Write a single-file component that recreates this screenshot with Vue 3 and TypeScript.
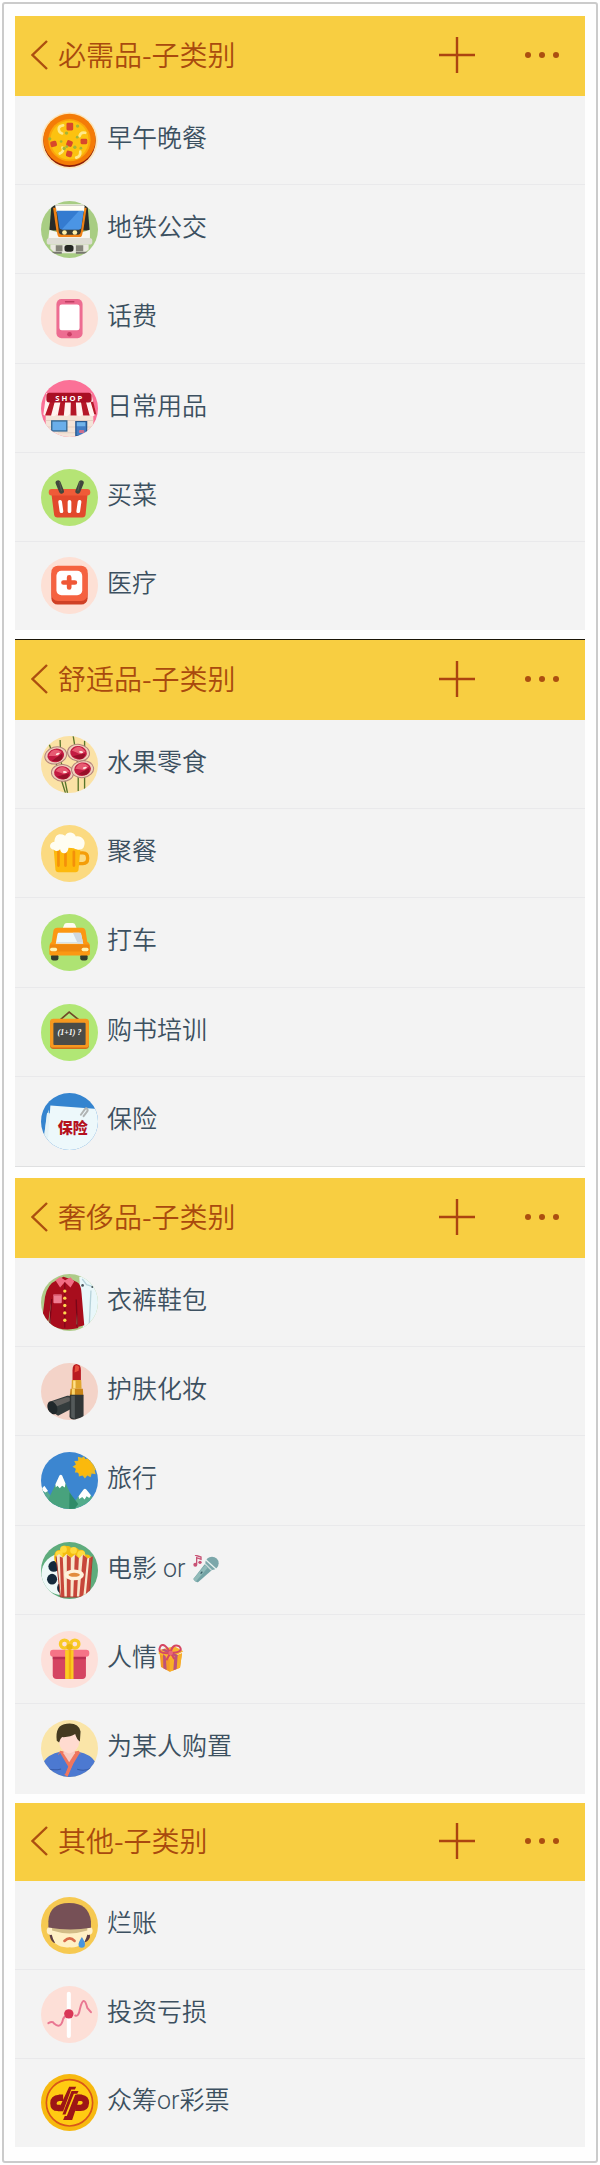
<script setup lang="ts">
interface Category {
  icon: string
  label: string
  emoji?: 'mic' | 'present'
}

interface Panel {
  title: string
  variant: string
  rows: Category[]
}

const panels: Panel[] = [
  {
    title: '必需品-子类别',
    variant: 'trimmed',
    rows: [
      { icon: 'pizza', label: '早午晚餐' },
      { icon: 'train', label: '地铁公交' },
      { icon: 'phone', label: '话费' },
      { icon: 'shop', label: '日常用品' },
      { icon: 'basket', label: '买菜' },
      { icon: 'medical', label: '医疗' },
    ],
  },
  {
    title: '舒适品-子类别',
    variant: 'ruled',
    rows: [
      { icon: 'fruit', label: '水果零食' },
      { icon: 'beer', label: '聚餐' },
      { icon: 'taxi', label: '打车' },
      { icon: 'board', label: '购书培训' },
      { icon: 'insurance', label: '保险' },
    ],
  },
  {
    title: '奢侈品-子类别',
    variant: 'plain',
    rows: [
      { icon: 'clothes', label: '衣裤鞋包' },
      { icon: 'lipstick', label: '护肤化妆' },
      { icon: 'travel', label: '旅行' },
      { icon: 'popcorn', label: '电影 or ', emoji: 'mic' },
      { icon: 'gift', label: '人情', emoji: 'present' },
      { icon: 'person', label: '为某人购置' },
    ],
  },
  {
    title: '其他-子类别',
    variant: 'trimmed compact',
    rows: [
      { icon: 'sad', label: '烂账' },
      { icon: 'chart', label: '投资亏损' },
      { icon: 'lottery', label: '众筹or彩票' },
    ],
  },
]
</script>

<template>
  <main class="sheet">
    <section v-for="panel in panels" :key="panel.title" class="panel" :class="panel.variant">
      <header class="bar">
        <button class="back" type="button" aria-label="返回">
          <svg width="17" height="30" viewBox="0 0 17 30"><path d="M16 1 1.500 15 16 29" fill="none" stroke="#ac4f10" stroke-width="2.400" /></svg>
        </button>
        <h2 class="title">{{ panel.title }}</h2>
        <button class="add" type="button" aria-label="添加">
          <svg width="36" height="36" viewBox="0 0 36 36"><path d="M18 0V36M0 18H36" fill="none" stroke="#ac4410" stroke-width="2.400" /></svg>
        </button>
        <button class="more" type="button" aria-label="更多">
          <svg width="36" height="8" viewBox="0 0 36 8" fill="#ac4f10"><circle cx="4" cy="4" r="3" /><circle cx="18" cy="4" r="3" /><circle cx="32" cy="4" r="3" /></svg>
        </button>
      </header>
      <ul class="list">
        <li v-for="row in panel.rows" :key="row.label" class="row">
          <svg class="icon" viewBox="0 0 170 170" aria-hidden="true">
            <g v-if="row.icon === 'pizza'">
              <circle cx="85" cy="85" r="84" fill="#fbe6bd" />
              <ellipse cx="85" cy="86" rx="78" ry="78" fill="#8f1f06" />
              <ellipse cx="85" cy="82" rx="78" ry="77" fill="#f47b07" />
              <ellipse cx="85" cy="84" rx="63" ry="63" fill="#fba60b" />
              <ellipse cx="85" cy="84" rx="57" ry="58" fill="#fcc210" />
              <g fill="#d8472b">
                <rect x="76" y="32" width="20" height="23" rx="4" />
                <rect x="28" y="87" width="19" height="17" rx="5" transform="rotate(-15 37 95)" />
                <rect x="76" y="85" width="18" height="18" rx="5" transform="rotate(20 85 94)" />
                <rect x="118" y="80" width="20" height="16" rx="4" />
                <rect x="75" y="116" width="18" height="18" rx="5" transform="rotate(15 84 125)" />
              </g>
              <g fill="none" stroke="#ffe98a" stroke-width="8" stroke-linecap="round">
                <path d="M66 40q-14 2-13 12t10 12M132 62q-14-3-17 10M64 106q6 12-8 18M117 118q2 14-12 18" />
              </g>
              <g fill="#a3b536">
                <circle cx="109" cy="42" r="5" /><circle cx="26" cy="80" r="5" /><circle cx="76" cy="63" r="5" />
                <circle cx="108" cy="75" r="4" /><circle cx="101" cy="105" r="5" /><circle cx="69" cy="109" r="5" />
                <circle cx="119" cy="108" r="4" /><circle cx="60" cy="88" r="4" /><circle cx="77" cy="103" r="4" />
              </g>
            </g>

            <g v-else-if="row.icon === 'train'">
              <rect width="170" height="170" fill="#a8cd83" />
              <path d="M31 12H139L145 88H25Z" fill="#292b28" />
              <path d="M42 10H130L119 110H53Z" fill="#f1f1e9" />
              <path d="M36 20 48 103q1 5 8 5H116q7 0 8-5L136 20" fill="#f08215" />
              <path d="M44 14H130L119 92q-1 8-8 9H63q-9-1-10-9Z" fill="#3a3b30" />
              <path d="M44 14H130L128 32H46Z" fill="#fffdf4" />
              <path d="M47 29H127L119 80q-1 5-6 5H61q-5 0-6-5Z" fill="#347bd0" />
              <path d="M113 30H127L120 79q-1 6-7 6H62Z" fill="#4b95e5" />
              <circle cx="70" cy="94" r="7" fill="#fff0a8" /><circle cx="101" cy="94" r="7" fill="#fff0a8" />
              <path d="M25 86 48 93q1 15 8 15H116q7 0 8-15l22-7V121H21Z" fill="#f6f6f0" />
              <rect x="17" y="110" width="136" height="20" rx="8" fill="#deddd4" />
              <path d="M28 130H142V145L128 156H42L28 142Z" fill="#e9e8df" />
              <rect x="44" y="132" width="20" height="18" fill="#858579" /><rect x="104" y="132" width="22" height="18" fill="#858579" />
              <rect x="70" y="131" width="27" height="20" rx="8" fill="#242621" />
              <path d="M28 151H62V157H28ZM104 151H144V157H104Z" fill="#77776e" />
            </g>

            <g v-else-if="row.icon === 'phone'">
              <rect width="170" height="170" fill="#fce0d8" />
              <rect x="46" y="27" width="78" height="117" rx="15" fill="#ed6c91" />
              <rect x="55" y="43" width="60" height="77" rx="7" fill="#fff" />
              <path d="M73 35H98" stroke="#be3f63" stroke-width="4" stroke-linecap="round" />
              <circle cx="85" cy="132" r="7" fill="#c83e65" />
            </g>

            <g v-else-if="row.icon === 'shop'">
              <rect width="170" height="170" fill="#fb7197" />
              <rect x="14" y="103" width="142" height="67" fill="#f4e4d8" />
              <path d="M14 121H156M14 140H156M50 157H130" stroke="#e4cfc2" stroke-width="3" />
              <path d="M16 39H150L163 103q-10 10-20 0q-9 10-19 0q-10 10-19 0q-10 10-20 0q-10 10-19 0q-10 10-19 0q-10 10-20 0q-10 10-20 0Z" fill="#fff3ef" />
              <path d="M27 65H41L30 106H12ZM58 65H72L68 106H50ZM89 65H104L106 106H88ZM119 65H134L145 106H126ZM148 65H156L165 103H159Z" fill="#b51727" />
              <rect x="16" y="38" width="135" height="29" rx="9" fill="#a90e23" />
              <text x="83" y="62" text-anchor="middle" class="sign">S H O P</text>
              <rect x="32" y="122" width="45" height="30" fill="#6aaeea" stroke="#356791" stroke-width="4" />
              <path d="M104 124H136V166H104Z" fill="#427dc4" stroke="#29598f" stroke-width="4" />
              <path d="M107 126H132V138H107Z" fill="#71b3e9" /><rect x="113" y="149" width="16" height="9" rx="3" fill="#cb708f" />
            </g>

            <g v-else-if="row.icon === 'basket'">
              <rect width="170" height="170" fill="#b5e475" />
              <path d="M31 73H139L133 136q-1 9-10 9H49q-9 0-10-9Z" fill="#e2492c" />
              <rect x="23" y="60" width="124" height="19" rx="9" fill="#ef5b38" />
              <path d="M51 41 61 66M120 41 110 66" stroke="#41473d" stroke-width="15" stroke-linecap="round" />
              <path d="M55 38 61 65M116 38 110 65" stroke="#66705b" stroke-width="2" />
              <path d="M57 98 61 126M85 98V126M115 98 111 126" stroke="#fff" stroke-width="11" stroke-linecap="round" />
            </g>

            <g v-else-if="row.icon === 'medical'">
              <rect width="170" height="170" fill="#fde0d5" />
              <rect x="31" y="35" width="108" height="107" rx="19" fill="#cf4126" />
              <rect x="31" y="26" width="108" height="105" rx="19" fill="#f56240" />
              <rect x="46" y="41" width="77" height="73" rx="15" fill="#fff" />
              <path d="M84 61V91M67 76H101" stroke="#ef5736" stroke-width="14" stroke-linecap="round" />
            </g>

            <g v-else-if="row.icon === 'fruit'">
              <rect width="170" height="170" fill="#fbe2a5" />
              <path d="M25 26 43 75 73 170M57 12 59 72 79 170M96 0 111 92V164M130 14V160" fill="none" stroke="#58752b" stroke-width="4" />
              <g v-for="(berry, i) in [[44, 58, -15], [112, 50, 8], [64, 110, 5], [124, 99, -8]]" :key="i" :transform="`translate(${berry[0]} ${berry[1]}) rotate(${berry[2]})`">
                <ellipse rx="33" ry="25" fill="#efd0bc" stroke="#b3847b" stroke-width="3" />
                <ellipse rx="25" ry="20" fill="#c31b42" />
                <path d="M-21-4Q-3-30 20-6L5 4-6 0Z" fill="#e75b72" />
                <path d="M-16 13 4 5 20 0Q20 18 4 19Z" fill="#971029" />
                <ellipse cx="7" cy="-3" rx="6" ry="3" fill="#ffe9e3" />
              </g>
            </g>

            <g v-else-if="row.icon === 'beer'">
              <rect width="170" height="170" fill="#fbda81" />
              <path d="M108 83H125q14 0 14 15v3q0 14-14 14H110" fill="none" stroke="#f49d08" stroke-width="10" />
              <path d="M42 66H118L112 133q-1 8-9 8H52q-8 0-9-8L38 72Z" fill="#fdb90d" />
              <path d="M52 79V121M73 82V121M98 80V121" stroke="#f4900a" stroke-width="8" stroke-linecap="round" />
              <path d="M38 74C23 72 23 52 40 50C41 29 55 23 72 32C80 17 99 22 104 34C120 30 135 46 129 61C126 76 111 76 98 69L82 68C79 93 57 85 57 72Q47 82 38 74Z" fill="#fffdf2" />
            </g>

            <g v-else-if="row.icon === 'taxi'">
              <rect width="170" height="170" fill="#aee373" />
              <path d="M64 45 69 32Q70 27 77 27H94Q101 27 102 32L107 45Z" fill="#fffcef" />
              <rect x="30" y="119" width="22" height="20" rx="7" fill="#333b2e" /><rect x="117" y="119" width="22" height="20" rx="7" fill="#333b2e" />
              <path d="M37 50Q39 41 49 41H122Q131 41 133 50L138 83Q146 87 146 98V119q0 5-7 5H32q-7 0-7-5V98Q25 87 32 83Z" fill="#fb9813" />
              <path d="M27 91H144V112H27Z" fill="#ef880e" />
              <path d="M52 56H114q5 0 6 6L126 89H44L49 61q1-5 3-5Z" fill="#eef7f9" />
              <path d="M95 56H119L126 89H110Z" fill="#ced8e0" />
              <path d="M46 85H124" stroke="#d7e3e5" stroke-width="3" />
              <rect x="27" y="101" width="21" height="10" rx="5" fill="#fff3b3" /><rect x="121" y="101" width="21" height="10" rx="5" fill="#fff3b3" />
            </g>

            <g v-else-if="row.icon === 'board'">
              <rect width="170" height="170" fill="#b1e775" />
              <path d="M54 50 84 24 116 50" fill="none" stroke="#714929" stroke-width="5" />
              <rect x="27" y="47" width="116" height="87" rx="10" fill="#d16f1b" />
              <rect x="27" y="44" width="116" height="86" rx="10" fill="#f7981f" />
              <rect x="37" y="56" width="96" height="66" rx="3" fill="#4b4c48" />
              <text x="85" y="92" text-anchor="middle" class="sum">(1+1) ?</text>
            </g>

            <g v-else-if="row.icon === 'insurance'">
              <rect width="170" height="170" fill="#3484cf" />
              <path d="M18 63 10 124 24 140V49Z" fill="#b6d9e9" />
              <path d="M18 60 31 61 21 141 9 130Z" fill="#e4f2f6" />
              <path d="M28 37 170 48V170H24L20 145Z" fill="#edf8fb" />
              <path d="M119 65 131 48q4-5 7 0t-2 9l-9 12" fill="none" stroke="#b0b4b4" stroke-width="6" stroke-linecap="round" />
              <text x="95" y="119" text-anchor="middle" class="policy">保险</text>
            </g>

            <g v-else-if="row.icon === 'clothes'">
              <rect width="170" height="170" fill="#aecb89" />
              <path d="M114 8H160L170 55V170H126Z" fill="#e9f7fa" />
              <path d="M123 15 136 32 152 37M149 49 143 170" fill="none" stroke="#b6d2da" stroke-width="4" />
              <circle cx="124" cy="34" r="4" fill="#46545b" /><circle cx="153" cy="39" r="3" fill="#46545b" />
              <path d="M48 18 67 8 89 16 107 24Q120 31 121 58L129 153 110 158 105 87V148L112 161Q63 173 28 151L31 78 20 155 2 147 12 68Q19 30 48 18Z" fill="#a80d1d" />
              <path d="M32 75 26 151M105 76 108 157" stroke="#790618" stroke-width="4" />
              <path d="M43 19 57 9 72 19 88 10 99 22 88 40 71 24 57 40Z" fill="#f16c83" />
              <path d="M71 25V160" stroke="#790618" stroke-width="3" />
              <rect x="37" y="61" width="25" height="26" rx="3" fill="#ee7d91" />
              <path d="M36 63H62" stroke="#d9576e" stroke-width="4" />
              <g fill="#ffd64f"><circle cx="71" cy="51" r="5" /><circle cx="71" cy="72" r="5" /><circle cx="71" cy="94" r="5" /><circle cx="71" cy="116" r="5" /><circle cx="71" cy="138" r="5" /></g>
            </g>

            <g v-else-if="row.icon === 'lipstick'">
              <rect width="170" height="170" fill="#f3d3c8" />
              <path d="M23 116 78 98q18-3 24 18l-4 17-47 24-28-17Z" fill="#343c3d" />
              <path d="M35 115 76 102q14-1 18 8l-46 19Z" fill="#62605e" />
              <ellipse cx="34" cy="134" rx="14" ry="20" transform="rotate(-25 34 134)" fill="#20282b" />
              <path d="M94 52V22Q94 3 107 3Q119 4 119 22V53Z" fill="#b91a20" />
              <path d="M102 8Q109 4 114 12L112 23 100 28Z" fill="#e84f3d" />
              <path d="M92 51H120L121 77H91Z" fill="#e0a62f" />
              <path d="M96 52H103V76H96Z" fill="#ffe18b" />
              <path d="M88 77H125L126 98H86Z" fill="#c98418" />
              <path d="M92 77H101V96H92Z" fill="#fbd66c" />
              <path d="M86 95H127V160Q127 170 105 170Q86 168 85 160Z" fill="#313536" />
              <path d="M90 98H101V166L90 162Z" fill="#54595a" />
            </g>

            <g v-else-if="row.icon === 'travel'">
              <rect width="170" height="170" fill="#3c86d0" />
              <path d="M-20 136 9 102 41 149V170H-20Z" fill="#56aa8f" />
              <path d="M0 112 10 101 21 116 13 121Z" fill="#fff" />
              <path d="M8 170 55 72q4-7 8 0l47 98Z" fill="#48a27d" />
              <path d="M84 170 126 113q5-6 10 0l45 57Z" fill="#52ac8b" />
              <path d="M85 121 111 155 100 170H84Z" fill="#2e8b68" />
              <path d="M43 96 55 70q4-5 8 0L73 94 71 106 63 101 56 108 49 101 44 106Z" fill="#fff" />
              <path d="M112 132 127 112q4-5 8 0l14 17-5 8-8-5-6 10-7-8-9 6Z" fill="#fff" />
              <path d="m128 13 5 9 9-8 3 11 11-4-1 12 11 2-6 8 10 6-10 6 3 11-12-2-3 11-10-5-7 9-7-9-11 3-1-12-11 0 3-11-10-6 10-7-5-10 12-1-1-12 12 3Z" fill="#e9b925" />
              <circle cx="128" cy="45" r="25" fill="#fbb90c" />
            </g>

            <g v-else-if="row.icon === 'popcorn'">
              <rect width="170" height="170" fill="#5eac7c" />
              <circle cx="63" cy="96" r="62" fill="#eef8f7" />
              <g fill="#14293b"><ellipse cx="38" cy="73" rx="16" ry="16" /><ellipse cx="33" cy="111" rx="15" ry="16" /><ellipse cx="61" cy="137" rx="13" ry="16" /></g>
              <path d="M40 38q2-15 18-14q4-18 18-12q13-2 14 8q13-9 23 3q21-2 17 15q19-3 23 17l-7 9H47q-11-9-7-26Z" fill="#f4bb10" />
              <g fill="#ffda3d"><circle cx="67" cy="22" r="10" /><circle cx="97" cy="25" r="10" /><circle cx="54" cy="37" r="11" /><circle cx="120" cy="37" r="12" /></g>
              <path d="M45 43 54 36 65 47 76 36 90 47 101 37 113 49 125 37 138 49 153 43 144 164H58Z" fill="#f8e6cd" />
              <path d="M56 43 65 47 70 164H60ZM77 38 89 46 88 164H77ZM101 38 113 48 107 164H96ZM125 38 138 48 126 164H114ZM144 48 153 43 144 164H133Z" fill="#c7463a" />
              <path d="M45 43 58 164H144L153 43" fill="none" stroke="#a7392e" stroke-width="3" />
              <ellipse cx="99" cy="98" rx="29" ry="16" fill="#fff2dc" /><ellipse cx="99" cy="98" rx="17" ry="6" fill="#e28c3d" />
            </g>

            <g v-else-if="row.icon === 'gift'">
              <rect width="170" height="170" fill="#fde0da" />
              <path d="M35 69H134V132q0 11-11 11H47q-12 0-12-11Z" fill="#d54461" />
              <path d="M35 74H134V84H35Z" fill="#b92f52" />
              <rect x="27" y="56" width="117" height="21" rx="9" fill="#f57487" />
              <rect x="72" y="57" width="25" height="86" fill="#fccc23" /><path d="M83 57H90V143H83Z" fill="#f3af11" />
              <g fill="none" stroke="#f9c927" stroke-width="10"><circle cx="70" cy="39" r="12" /><circle cx="101" cy="39" r="12" /></g>
              <circle cx="85" cy="48" r="9" fill="#ebb713" />
            </g>

            <g v-else-if="row.icon === 'person'">
              <rect width="170" height="170" fill="#fae5a8" />
              <path d="M8 124Q22 103 57 95L84 105 111 95Q148 103 161 124L150 170H20Z" fill="#4c79d1" />
              <path d="M57 92 69 94 84 122 101 94 113 92 119 104 97 132 80 170 70 163 80 139 51 104Z" fill="#ef765e" />
              <path d="M57 98 81 139 72 162 46 112ZM115 99 127 110 86 170H79L97 130Z" fill="#4c79d1" />
              <path d="M67 82H101V99L84 126 67 99Z" fill="#f7ccc1" />
              <path d="M55 39H114V66Q113 90 84 100Q55 90 54 66Z" fill="#ffdbd0" />
              <path d="M47 62Q41 14 77 11Q112 7 118 34L116 64Q106 58 102 42Q88 52 63 51Q56 57 54 67Z" fill="#443a20" />
              <path d="M15 144Q36 152 60 146M108 147Q132 155 151 142" fill="none" stroke="#365aa8" stroke-width="3" />
            </g>

            <g v-else-if="row.icon === 'sad'">
              <rect width="170" height="170" fill="#f6c951" />
              <path d="M25 96H47V137Q31 139 26 116ZM122 96H146V120Q139 139 121 134Z" fill="#5e3d43" />
              <circle cx="29" cy="101" r="12" fill="#fff0c9" /><circle cx="142" cy="101" r="12" fill="#fff0c9" />
              <path d="M30 83H141Q143 111 128 137Q104 153 85 150Q62 153 43 139Q27 113 30 83Z" fill="#fff0c5" />
              <path d="M33 83H138V100Q84 117 33 100Z" fill="#d2bc87" />
              <path d="M22 91V72Q25 19 83 18Q142 17 149 72V92Q85 102 22 91Z" fill="#765056" />
              <path d="M70 131Q86 116 100 131" fill="none" stroke="#d86b4b" stroke-width="8" stroke-linecap="round" />
              <path d="M122 119Q133 137 131 142A9 9 0 0 1 112 142Q111 136 122 119Z" fill="#4795dd" />
            </g>

            <g v-else-if="row.icon === 'chart'">
              <rect width="170" height="170" fill="#fddfd7" />
              <path d="M83 23V149" stroke="#fff" stroke-width="12" stroke-linecap="round" />
              <path d="M22 111Q35 103 39 112Q59 130 66 98L70 92M102 88Q112 93 116 69Q127 23 138 65L149 78" fill="none" stroke="#e97792" stroke-width="6" stroke-linecap="round" stroke-linejoin="round" />
              <circle cx="83" cy="83" r="14" fill="#d93656" />
            </g>

            <g v-else>
              <rect width="170" height="170" fill="#f7b90f" />
              <circle cx="85" cy="86" r="69" fill="#ffcb12" stroke="#d8561a" stroke-width="5" />
              <path d="M66 71H54Q37 72 37 87Q37 101 50 101H59" fill="none" stroke="#9d1516" stroke-width="19" />
              <path d="M106 71H121Q134 73 134 86Q133 101 118 101H102" fill="none" stroke="#9d1516" stroke-width="19" />
              <path d="M84 38H105L101 46H90L66 111H50Z" fill="#9d1516" />
              <path d="M91 51H112L108 59H98L73 121H64Z" fill="#9d1516" />
              <path d="M102 62H118L93 137H66L71 125H77Z" fill="#9d1516" />
            </g>
          </svg>

          <span class="label">{{ row.label }}<svg v-if="row.emoji === 'mic'" class="emoji" viewBox="0 0 78 84" role="img" aria-label="麦克风">
              <path d="M6 0 24 6V13L11 8V28" fill="none" stroke="#c85275" stroke-width="4" /><circle cx="7" cy="29" r="6" fill="#c85275" /><circle cx="21" cy="22" r="5" fill="#c85275" />
              <path d="M35 28 56 46 16 81Q7 84 1 72Z" fill="#73a3a5" /><path d="M36 31 44 38 8 80 1 72Z" fill="#91bbb9" />
              <circle cx="57" cy="25" r="20" fill="#7ca7aa" /><path d="M38 14 69 42" stroke="#e8f1ef" stroke-width="4" /><path d="M36 26 55 45" stroke="#cbdcda" stroke-width="4" /><path d="M28 50 23 56" stroke="#365b65" stroke-width="4" />
            </svg><svg v-else-if="row.emoji === 'present'" class="emoji" viewBox="0 0 78 84" role="img" aria-label="礼物">
              <path d="M5 27 35 43V83L9 69ZM35 43 72 28 66 71 35 83Z" fill="#f39b27" /><path d="M35 43 72 28 66 71 35 83Z" fill="#f8af26" />
              <path d="M3 18 49 7 76 22 35 45 2 29Z" fill="#f8b42f" />
              <path d="M15 31 23 37 26 78 16 73ZM49 38 59 34 56 75 46 79ZM19 14 61 34 52 38 10 18Z" fill="#bd527a" />
              <path d="M37 27Q-5 31 7 7Q18-7 37 27Q43-3 64 7Q80 25 37 27ZM37 27 25 49M38 26 49 45" fill="none" stroke="#d64763" stroke-width="6" />
              <circle cx="38" cy="27" r="7" fill="#e86776" />
            </svg></span>
        </li>
      </ul>
    </section>
  </main>
</template>

<style>
body {
  margin: 0;
  background: #fff;
}
</style>

<style scoped>
.sheet {
  box-sizing: border-box;
  display: flex;
  flex-direction: column;
  gap: 9px;
  margin: 2px 2px 3px;
  padding: 12px 11px 14px;
  border: 2px solid #cbcbcb;
  border-radius: 3px;
  background: #fefefe;
  font-family: Roboto, "Noto Sans CJK SC", sans-serif;
}

.panel.ruled {
  border-top: 1px solid #1c1608;
  border-bottom: 1px solid #dfe0e1;
  margin-bottom: 2px;
}

.bar {
  box-sizing: border-box;
  display: flex;
  align-items: center;
  height: 80px;
  padding: 0 19px 2px 8px;
  background: #f8ce41;
  color: #a94a0e;
}

.compact .bar {
  height: 78px;
}

.bar button {
  display: flex;
  align-items: center;
  justify-content: center;
  height: 48px;
  padding: 0;
  border: 0;
  background: none;
  cursor: pointer;
}

.bar .back {
  width: 32px;
  margin-right: 3px;
}

.title {
  flex: 1;
  margin: 0;
  padding-bottom: 2px;
  font-family: "Noto Sans CJK SC", sans-serif;
  font-size: 28px;
  font-weight: 350;
  line-height: 40px;
}

.add {
  width: 48px;
}

.more {
  width: 48px;
  margin-left: 37px;
}

.list {
  margin: 0;
  padding: 0;
  list-style: none;
  background: #f3f3f3;
}

.row {
  box-sizing: border-box;
  display: flex;
  align-items: center;
  gap: 9px;
  height: 89px;
  padding-left: 26px;
  border-bottom: 1px solid #e9e9eb;
}

.row:nth-child(3n) {
  height: 90px;
}

.row:last-child {
  border-bottom-color: transparent;
}

.trimmed .row:last-child {
  height: 88px;
}

.icon {
  flex: none;
  width: 57px;
  height: 57px;
  border-radius: 50%;
}

.label {
  display: flex;
  align-items: center;
  padding-bottom: 3px;
  color: #3c5060;
  font-size: 25px;
  font-weight: 350;
  line-height: 36px;
  white-space: pre;
}

.emoji {
  width: 26px;
  height: 28px;
  margin-left: 1px;
}

.sign {
  fill: #fff;
  font-family: "Noto Sans", sans-serif;
  font-size: 23px;
  font-weight: 700;
}

.sum {
  fill: #fff;
  font-family: "Liberation Serif", serif;
  font-size: 24px;
  font-style: italic;
  font-weight: 700;
}

.policy {
  fill: #b5101d;
  font-family: "Noto Sans CJK SC", sans-serif;
  font-size: 45px;
  font-weight: 900;
}
</style>
